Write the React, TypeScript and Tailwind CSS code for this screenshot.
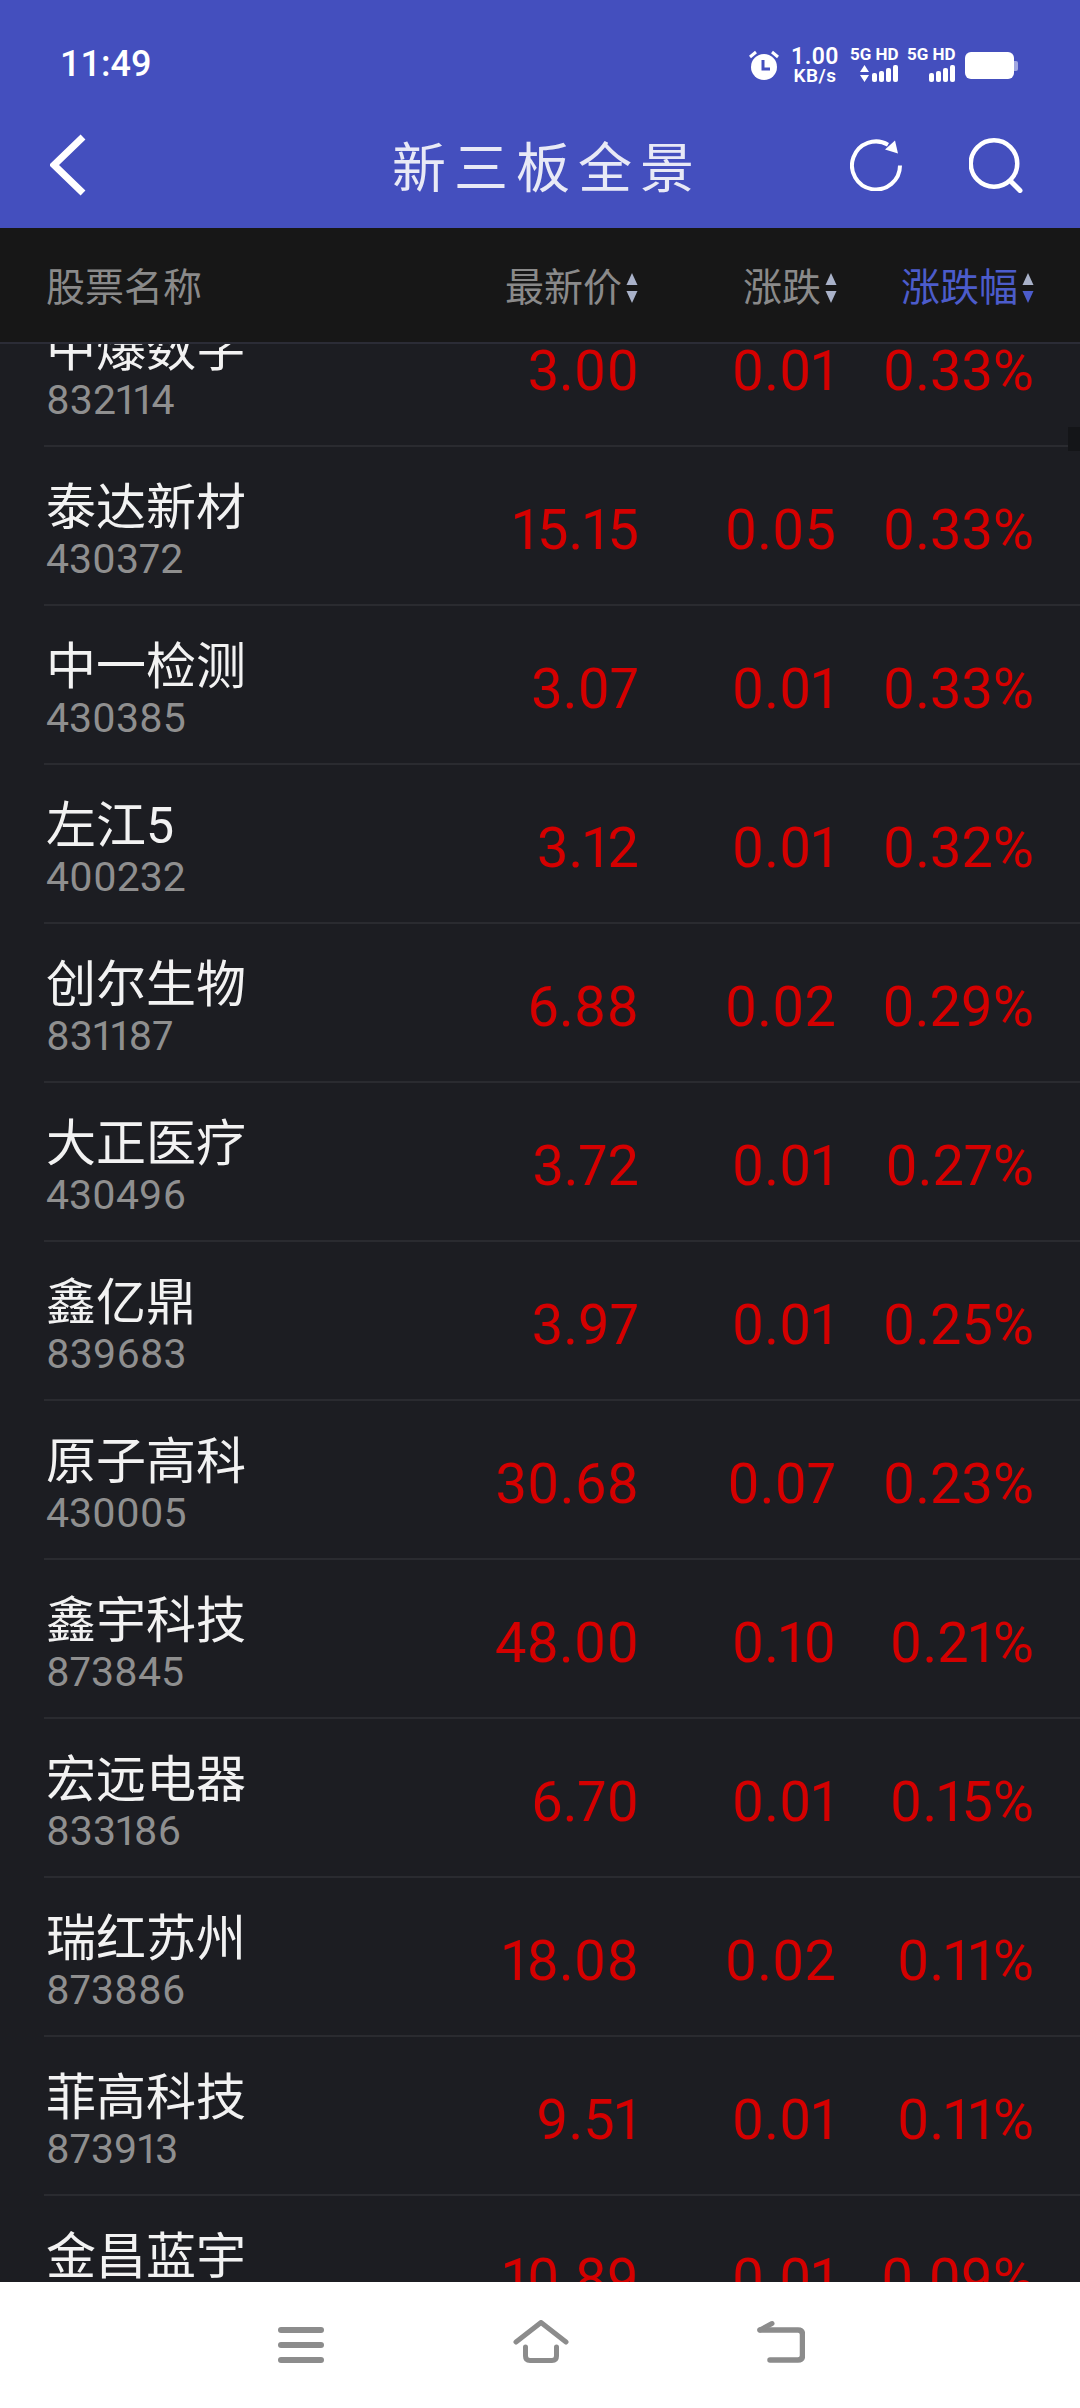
import React from 'react';

const stocks = [
  { name: '中爆数字', code: '832114', price: '3.00', change: '0.01', pct: '0.33%' },
  { name: '泰达新材', code: '430372', price: '15.15', change: '0.05', pct: '0.33%' },
  { name: '中一检测', code: '430385', price: '3.07', change: '0.01', pct: '0.33%' },
  { name: '左江5', code: '400232', price: '3.12', change: '0.01', pct: '0.32%' },
  { name: '创尔生物', code: '831187', price: '6.88', change: '0.02', pct: '0.29%' },
  { name: '大正医疗', code: '430496', price: '3.72', change: '0.01', pct: '0.27%' },
  { name: '鑫亿鼎', code: '839683', price: '3.97', change: '0.01', pct: '0.25%' },
  { name: '原子高科', code: '430005', price: '30.68', change: '0.07', pct: '0.23%' },
  { name: '鑫宇科技', code: '873845', price: '48.00', change: '0.10', pct: '0.21%' },
  { name: '宏远电器', code: '833186', price: '6.70', change: '0.01', pct: '0.15%' },
  { name: '瑞红苏州', code: '873886', price: '18.08', change: '0.02', pct: '0.11%' },
  { name: '菲高科技', code: '873913', price: '9.51', change: '0.01', pct: '0.11%' },
  { name: '金昌蓝宇', code: '873656', price: '10.89', change: '0.01', pct: '0.09%' },
];

function SortArrows({ active = false }: { active?: boolean }) {
  return (
    <svg width="12" height="30" viewBox="0 0 12 30" className="shrink-0">
      <path d="M6 0l5.5 12H.5z" fill="#a9b2c9" />
      <path d="M6 30l5.5-12H.5z" fill={active ? '#4c5ccb' : '#a9b2c9'} />
    </svg>
  );
}

function Bars({ arrows = false }: { arrows?: boolean }) {
  return (
    <div className="flex items-end justify-end gap-[2px] h-[17px]">
      {arrows && (
        <svg width="9" height="17" viewBox="0 0 9 17" className="mr-[1px]">
          <path d="M4.5 0l4.5 7H0zM4.5 17L0 10h9z" fill="#fff" />
        </svg>
      )}
      <div className="w-[5px] h-[9px] rounded-[2px] bg-white" />
      <div className="w-[5px] h-[11px] rounded-[2px] bg-white" />
      <div className="w-[5px] h-[14px] rounded-[2px] bg-white" />
      <div className="w-[5px] h-[17px] rounded-[2px] bg-white" />
    </div>
  );
}

function StatusBar() {
  return (
    <div className="h-[90px] pt-[44px] pl-[60px] pr-[62px] flex items-start justify-between text-white">
      <span className="text-[36px] leading-[40px] font-medium">11:49</span>
      <div className="flex items-start pt-[3px]">
        <svg width="32" height="32" viewBox="0 0 32 32" className="mr-[11px] mt-[2px]">
          <circle cx="16" cy="18" r="13" fill="#fff" />
          <path d="M15 11v9h7" fill="none" stroke="#444fbe" strokeWidth="3" />
          <path d="M2 8l6-5M30 8l-6-5" stroke="#fff" strokeWidth="3" />
        </svg>
        <div className="w-[48px] flex flex-col items-center font-semibold">
          <span className="text-[23px] leading-[20px] tracking-[0.5px]">1.00</span>
          <span className="text-[19px] leading-[17px] tracking-[0.5px]">KB/s</span>
        </div>
        <div className="ml-[11px] w-[48px] flex flex-col gap-[3px]">
          <span className="text-[17px] leading-[15px] font-bold whitespace-nowrap">5G HD</span>
          <Bars arrows />
        </div>
        <div className="ml-[9px] w-[48px] flex flex-col gap-[3px]">
          <span className="text-[17px] leading-[15px] font-bold whitespace-nowrap">5G HD</span>
          <Bars />
        </div>
        <div className="ml-[10px] mt-[5px] flex items-center">
          <div className="w-[49px] h-[27px] rounded-[6px] bg-white" />
          <div className="w-[4px] h-[10px] rounded-r-[2px] bg-[#a0a6e0]" />
        </div>
      </div>
    </div>
  );
}

function NavBar() {
  return (
    <div className="h-[138px] flex items-center justify-between pl-[50px] pr-[57px] pt-[11px]">
      <svg width="36" height="62" viewBox="0 0 36 62">
        <path d="M33 3L4 31l29 28" fill="none" stroke="#fff" strokeWidth="7" />
      </svg>
      <span className="ml-[158px] mt-[10px] text-[54px] leading-[60px] tracking-[8px] text-[#e8e9f6]">新三板全景</span>
      <div className="flex items-center gap-[67px]">
        <svg width="52" height="52" viewBox="0 0 52 52">
          <path d="M50 26.5A24 24 0 1 1 38 5.7" fill="none" stroke="#fff" strokeWidth="4" />
          <path d="M45 1.5l3 13-13-4z" fill="#fff" />
        </svg>
        <svg width="54" height="56" viewBox="0 0 54 56">
          <circle cx="25" cy="26.5" r="23.25" fill="none" stroke="#fff" strokeWidth="4.5" />
          <path d="M42 44.5l9 9" stroke="#fff" strokeWidth="5" strokeLinecap="round" />
        </svg>
      </div>
    </div>
  );
}

function TableHeader() {
  return (
    <div className="h-[116px] bg-[#171717] border-b-2 border-[#2b2c36] flex items-center pl-[46px] pr-[46px] pt-[5px] text-[39px] leading-[44px] text-[#8a8a8a]">
      <span className="flex-1">股票名称</span>
      <div className="w-[300px] flex items-center justify-end gap-[4px]">
        <span>最新价</span>
        <SortArrows />
      </div>
      <div className="w-[199px] flex items-center justify-end gap-[4px]">
        <span>涨跌</span>
        <SortArrows />
      </div>
      <div className="w-[197px] flex items-center justify-end gap-[4px] text-[#4c5ccb]">
        <span>涨跌幅</span>
        <SortArrows active />
      </div>
    </div>
  );
}

function StockRow({ stock }: { stock: (typeof stocks)[number] }) {
  return (
    <div className="ml-[44px] h-[159px] shrink-0 border-b-2 border-[#2a2b30] flex items-start pr-[46px]">
      <div className="flex-1 pl-[2px] pt-[31px]">
        <div className="text-[50px] leading-[60px] text-[#f2f2f2]">{stock.name}</div>
        <div className="text-[41px] leading-[42px] proportional-nums text-[#8f8f8f]">{stock.code}</div>
      </div>
      <div className="flex pt-[51px] text-[56px] leading-[64px] font-normal proportional-nums text-[#d40000]">
        <span className="w-[300px] text-right">{stock.price}</span>
        <span className="w-[197px] text-right">{stock.change}</span>
        <span className="w-[198px] text-right">{stock.pct}</span>
      </div>
    </div>
  );
}

function BottomBar() {
  return (
    <div className="h-[126px] shrink-0 bg-white flex items-start justify-center pt-[38px] pl-[2px] gap-[188px]">
      <svg width="46" height="46" viewBox="0 0 46 46">
        <rect x="0" y="7" width="46" height="6" rx="3" fill="#8c8c8c" />
        <rect x="0" y="22" width="46" height="6" rx="3" fill="#8c8c8c" />
        <rect x="0" y="37" width="46" height="6" rx="3" fill="#8c8c8c" />
      </svg>
      <svg width="58" height="46" viewBox="0 0 58 46">
        <path d="M4 22L29 2.5 54 22" fill="none" stroke="#8c8c8c" strokeWidth="5" strokeLinecap="round" strokeLinejoin="round" />
        <path d="M13.5 27v9q0 4.500 4.500 4.500h22q4.500 0 4.500-4.500v-9" fill="none" stroke="#8c8c8c" strokeWidth="5" strokeLinecap="round" />
      </svg>
      <svg width="48" height="46" viewBox="0 0 48 46" className="ml-[-1px]">
        <path d="M3 10h38q4.500 0 4.500 4.500v21q0 4.500-4.500 4.500H13" fill="none" stroke="#8c8c8c" strokeWidth="5.500" strokeLinecap="round" />
        <path d="M3 10l12-6.500" fill="none" stroke="#8c8c8c" strokeWidth="5" strokeLinecap="round" />
      </svg>
    </div>
  );
}

export default function App() {
  return (
    <div className="w-[1080px] h-[2408px] flex flex-col overflow-hidden bg-[#1c1d22] font-['Roboto','Noto_Sans_CJK_SC',sans-serif]">
      <div className="h-[228px] shrink-0 bg-[#444fbe]">
        <StatusBar />
        <NavBar />
      </div>
      <TableHeader />
      <div className="relative flex-1 overflow-hidden">
        <div className="flex flex-col mt-[-56px]">
          {stocks.map((stock) => (
            <StockRow key={stock.code} stock={stock} />
          ))}
        </div>
        <div className="absolute right-0 top-[83px] w-[12px] h-[24px] bg-[#141518]" />
      </div>
      <BottomBar />
    </div>
  );
}
